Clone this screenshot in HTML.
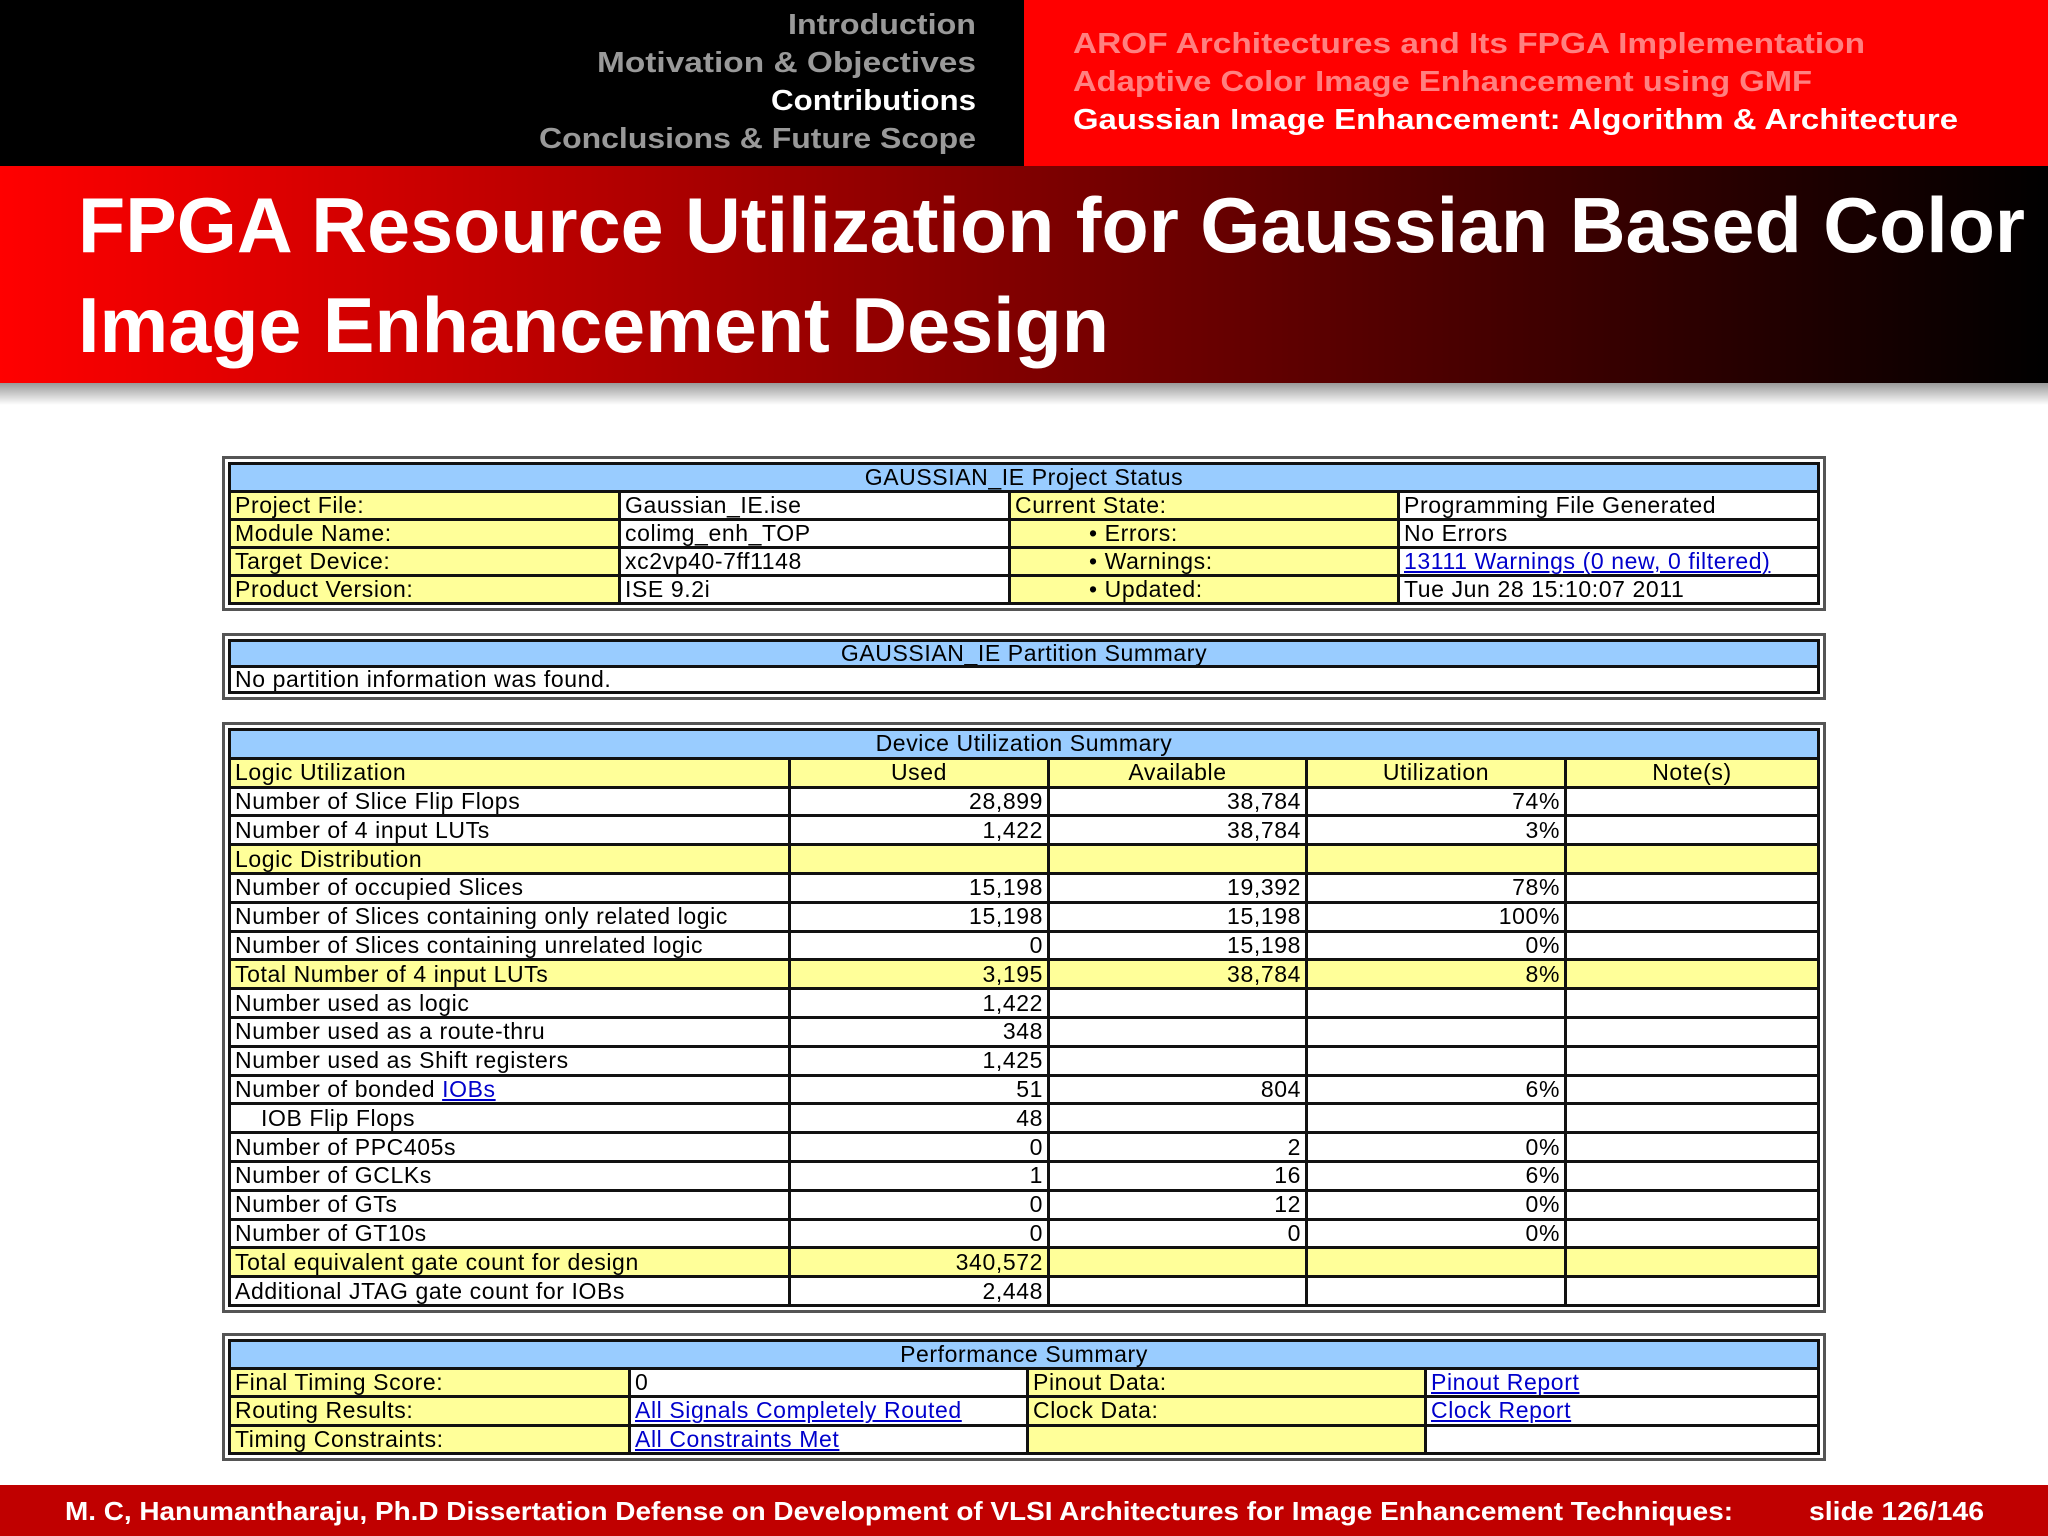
<!DOCTYPE html>
<html><head><meta charset="utf-8"><style>
*{margin:0;padding:0;box-sizing:border-box}
body{width:2048px;height:1536px;background:#fff;position:relative;overflow:hidden;font-family:"Liberation Sans",Arial,sans-serif}
svg{position:absolute;left:0;top:0}
.w{position:absolute;left:222px;width:1604px;border:3px solid #555;padding:3px;background:#fff}
table{width:100%;border-collapse:collapse;table-layout:fixed;font-size:23px;letter-spacing:0.6px;color:#000}
td{border:3px solid #111;padding:0 4px;white-space:nowrap;overflow:hidden;line-height:1}
.b{background:#99ccff;text-align:center}
.y{background:#ffff99}
.r{text-align:right}
.c{text-align:center}
a{color:#0000cc;text-decoration:underline}
.t1 tr{height:28px}.t3 tr{height:28.8px}.t4 tr{height:28.2px}.t2 tr{height:26px}
.ind{padding-left:78px}
</style></head><body>
<svg width="2048" height="1536" xmlns="http://www.w3.org/2000/svg">
<defs>
<linearGradient id="g" x1="0" x2="1" y1="0" y2="0"><stop offset="0" stop-color="#ff0000"/><stop offset="1" stop-color="#000"/></linearGradient>
<linearGradient id="s" x1="0" x2="0" y1="0" y2="1"><stop offset="0" stop-color="#999"/><stop offset="1" stop-color="#fff"/></linearGradient>
</defs>
<rect x="0" y="0" width="1024" height="166" fill="#000"/>
<rect x="1024" y="0" width="1024" height="166" fill="#ff0000"/>
<rect x="0" y="166" width="2048" height="217" fill="url(#g)"/>
<rect x="0" y="383" width="2048" height="22" fill="url(#s)"/>
<g font-family="Liberation Sans, sans-serif" font-weight="bold" font-size="29">
<text x="788" y="34" fill="#999" textLength="188" lengthAdjust="spacingAndGlyphs">Introduction</text>
<text x="597" y="72" fill="#999" textLength="379" lengthAdjust="spacingAndGlyphs">Motivation &amp; Objectives</text>
<text x="771" y="110" fill="#fff" textLength="205" lengthAdjust="spacingAndGlyphs">Contributions</text>
<text x="539" y="148" fill="#999" textLength="437" lengthAdjust="spacingAndGlyphs">Conclusions &amp; Future Scope</text>
<text x="1073" y="53" fill="#ff8080" textLength="792" lengthAdjust="spacingAndGlyphs">AROF Architectures and Its FPGA Implementation</text>
<text x="1073" y="91" fill="#ff8080" textLength="739" lengthAdjust="spacingAndGlyphs">Adaptive Color Image Enhancement using GMF</text>
<text x="1073" y="129" fill="#fff" textLength="885" lengthAdjust="spacingAndGlyphs">Gaussian Image Enhancement: Algorithm &amp; Architecture</text>
</g>
<g font-family="Liberation Sans, sans-serif" font-weight="bold" font-size="78" fill="#fff">
<text x="78" y="252" textLength="1947" lengthAdjust="spacingAndGlyphs">FPGA Resource Utilization for Gaussian Based Color</text>
<text x="78" y="352" textLength="1031" lengthAdjust="spacingAndGlyphs">Image Enhancement Design</text>
</g>
<rect x="0" y="1485" width="2048" height="51" fill="#c00000"/>
<g font-family="Liberation Sans, sans-serif" font-weight="bold" font-size="26" fill="#fff">
<text x="65" y="1520" textLength="1668" lengthAdjust="spacingAndGlyphs">M. C, Hanumantharaju, Ph.D Dissertation Defense on Development of VLSI Architectures for Image Enhancement Techniques:</text>
<text x="1809" y="1520" textLength="175" lengthAdjust="spacingAndGlyphs">slide 126/146</text>
</g>
</svg>

<div class="w" style="top:456px">
<table class="t1">
<colgroup><col style="width:390px"><col style="width:390px"><col style="width:389px"><col></colgroup>
<tr><td class="b" colspan="4">GAUSSIAN_IE Project Status</td></tr>
<tr><td class="y">Project File:</td><td>Gaussian_IE.ise</td><td class="y">Current State:</td><td>Programming File Generated</td></tr>
<tr><td class="y">Module Name:</td><td>colimg_enh_TOP</td><td class="y ind">&bull; Errors:</td><td>No Errors</td></tr>
<tr><td class="y">Target Device:</td><td>xc2vp40-7ff1148</td><td class="y ind">&bull; Warnings:</td><td><a>13111 Warnings (0 new, 0 filtered)</a></td></tr>
<tr><td class="y">Product Version:</td><td>ISE 9.2i</td><td class="y ind">&bull; Updated:</td><td>Tue Jun 28 15:10:07 2011</td></tr>
</table></div>

<div class="w" style="top:633px">
<table class="t2">
<tr><td class="b">GAUSSIAN_IE Partition Summary</td></tr>
<tr><td>No partition information was found.</td></tr>
</table></div>

<div class="w" style="top:722px">
<table class="t3">
<colgroup><col style="width:560px"><col style="width:259px"><col style="width:258px"><col style="width:259px"><col></colgroup>
<tr><td class="b" colspan="5">Device Utilization Summary</td></tr>
<tr class="y"><td>Logic Utilization</td><td class="c">Used</td><td class="c">Available</td><td class="c">Utilization</td><td class="c">Note(s)</td></tr>
<tr><td>Number of Slice Flip Flops</td><td class="r">28,899</td><td class="r">38,784</td><td class="r">74%</td><td></td></tr>
<tr><td>Number of 4 input LUTs</td><td class="r">1,422</td><td class="r">38,784</td><td class="r">3%</td><td></td></tr>
<tr class="y"><td>Logic Distribution</td><td></td><td></td><td></td><td></td></tr>
<tr><td>Number of occupied Slices</td><td class="r">15,198</td><td class="r">19,392</td><td class="r">78%</td><td></td></tr>
<tr><td>Number of Slices containing only related logic</td><td class="r">15,198</td><td class="r">15,198</td><td class="r">100%</td><td></td></tr>
<tr><td>Number of Slices containing unrelated logic</td><td class="r">0</td><td class="r">15,198</td><td class="r">0%</td><td></td></tr>
<tr class="y"><td>Total Number of 4 input LUTs</td><td class="r">3,195</td><td class="r">38,784</td><td class="r">8%</td><td></td></tr>
<tr><td>Number used as logic</td><td class="r">1,422</td><td></td><td></td><td></td></tr>
<tr><td>Number used as a route-thru</td><td class="r">348</td><td></td><td></td><td></td></tr>
<tr><td>Number used as Shift registers</td><td class="r">1,425</td><td></td><td></td><td></td></tr>
<tr><td>Number of bonded <a>IOBs</a></td><td class="r">51</td><td class="r">804</td><td class="r">6%</td><td></td></tr>
<tr><td style="padding-left:30px">IOB Flip Flops</td><td class="r">48</td><td></td><td></td><td></td></tr>
<tr><td>Number of PPC405s</td><td class="r">0</td><td class="r">2</td><td class="r">0%</td><td></td></tr>
<tr><td>Number of GCLKs</td><td class="r">1</td><td class="r">16</td><td class="r">6%</td><td></td></tr>
<tr><td>Number of GTs</td><td class="r">0</td><td class="r">12</td><td class="r">0%</td><td></td></tr>
<tr><td>Number of GT10s</td><td class="r">0</td><td class="r">0</td><td class="r">0%</td><td></td></tr>
<tr class="y"><td>Total equivalent gate count for design</td><td class="r">340,572</td><td></td><td></td><td></td></tr>
<tr><td>Additional JTAG gate count for IOBs</td><td class="r">2,448</td><td></td><td></td><td></td></tr>
</table></div>

<div class="w" style="top:1333px">
<table class="t4">
<colgroup><col style="width:400px"><col style="width:398px"><col style="width:398px"><col></colgroup>
<tr><td class="b" colspan="4">Performance Summary</td></tr>
<tr><td class="y">Final Timing Score:</td><td>0</td><td class="y">Pinout Data:</td><td><a>Pinout Report</a></td></tr>
<tr><td class="y">Routing Results:</td><td><a>All Signals Completely Routed</a></td><td class="y">Clock Data:</td><td><a>Clock Report</a></td></tr>
<tr><td class="y">Timing Constraints:</td><td><a>All Constraints Met</a></td><td class="y"></td><td></td></tr>
</table></div>
</body></html>
